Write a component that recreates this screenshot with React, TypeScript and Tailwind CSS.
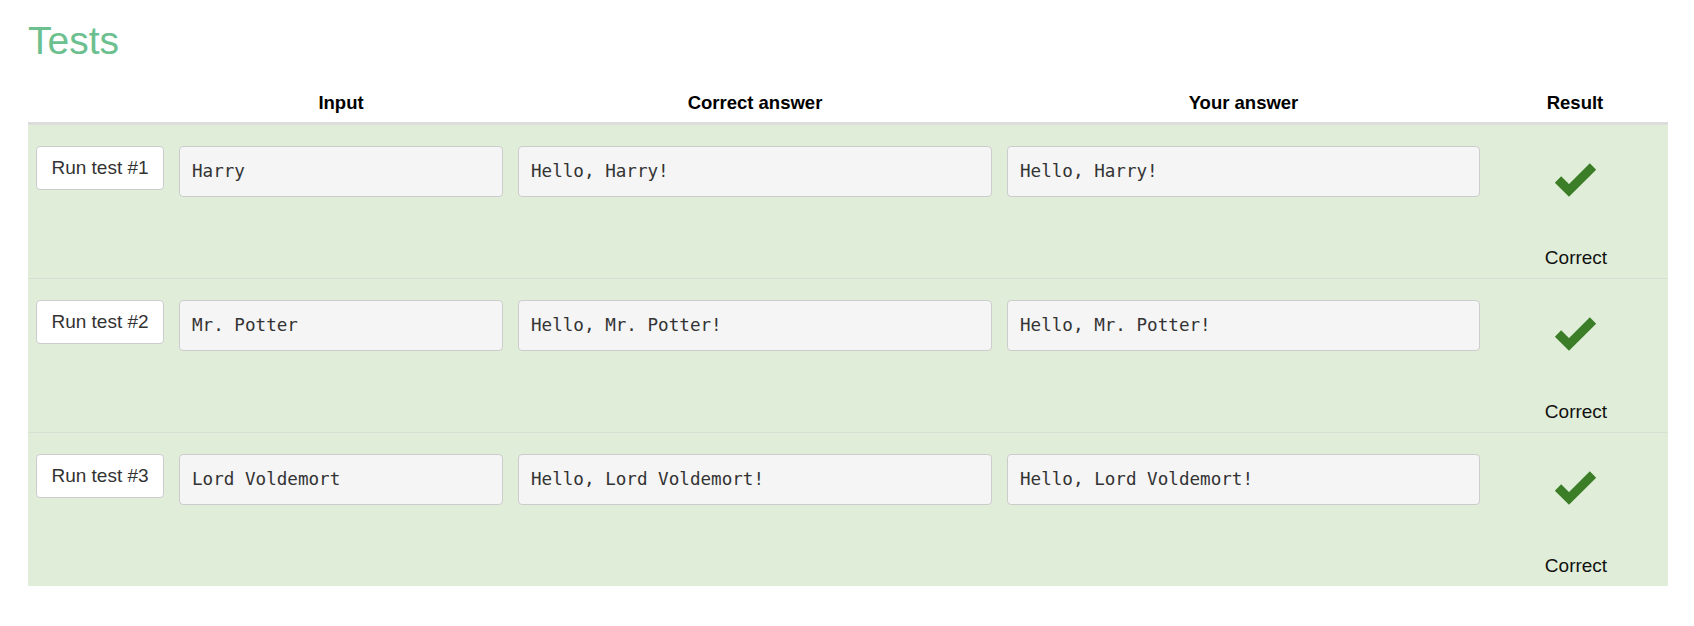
const tests = [
  { input: 'Harry', expected: 'Hello, Harry!', actual: 'Hello, Harry!' },
  { input: 'Mr. Potter', expected: 'Hello, Mr. Potter!', actual: 'Hello, Mr. Potter!' },
  { input: 'Lord Voldemort', expected: 'Hello, Lord Voldemort!', actual: 'Hello, Lord Voldemort!' },
];

const sans = 'font-["Liberation_Sans","Helvetica_Neue",Arial,sans-serif]';
const cols = 'grid grid-cols-[128px_324px_474px_473px_1fr] gap-x-[15px] pl-2 pr-[13px]';

function CheckIcon() {
  return (
    <svg width="42" height="34" viewBox="0 0 42 34" className="overflow-visible">
      <polyline
        points="3,16.5 14,27.5 38,3.5"
        fill="none"
        stroke="#3c7e28"
        strokeWidth="9"
        strokeLinejoin="miter"
        strokeLinecap="butt"
      />
    </svg>
  );
}

function Code({ children }: { children: string }) {
  return (
    <div className="h-[51px] flex items-center px-3 bg-[#f5f5f5] border border-[#cccccc] rounded-[4px] text-[#333] text-[17.6px] font-['DejaVu_Sans_Mono',monospace] whitespace-pre">
      {children}
    </div>
  );
}

export default function App() {
  return (
    <div className={`bg-white min-h-[626px] pl-7 pr-[26px] ${sans}`}>
      <h2 className="pt-[21px] text-[39px] leading-[39px] text-[#6cc08f] font-normal">Tests</h2>

      <div className="mt-[30px]">
        {/* header */}
        <div className={`${cols} border-b-[3px] border-[#dddddd] pb-[6px] text-[18.5px] leading-[26px] font-bold text-black`}>
          <div />
          <div className="text-center">Input</div>
          <div className="text-center">Correct answer</div>
          <div className="text-center">Your answer</div>
          <div className="text-center">Result</div>
        </div>

        {tests.map((t, i) => (
          <div
            key={i}
            className={`${cols} items-start bg-[#e0eed9] pt-[21px] pb-[7px] ${i < tests.length - 1 ? 'border-b border-[#d8dfd3]' : ''}`}
          >
            <button className="h-[44px] bg-white border border-[#cccccc] rounded-[4px] text-[19px] text-[#333]">
              Run test #{i + 1}
            </button>
            <Code>{t.input}</Code>
            <Code>{t.expected}</Code>
            <Code>{t.actual}</Code>
            <div className="flex flex-col items-center pl-[2px]">
              <div className="mt-[17px]">
                <CheckIcon />
              </div>
              <div className="mt-[48px] text-[19px] leading-[26px] text-[#111]">Correct</div>
            </div>
          </div>
        ))}
      </div>
    </div>
  );
}
